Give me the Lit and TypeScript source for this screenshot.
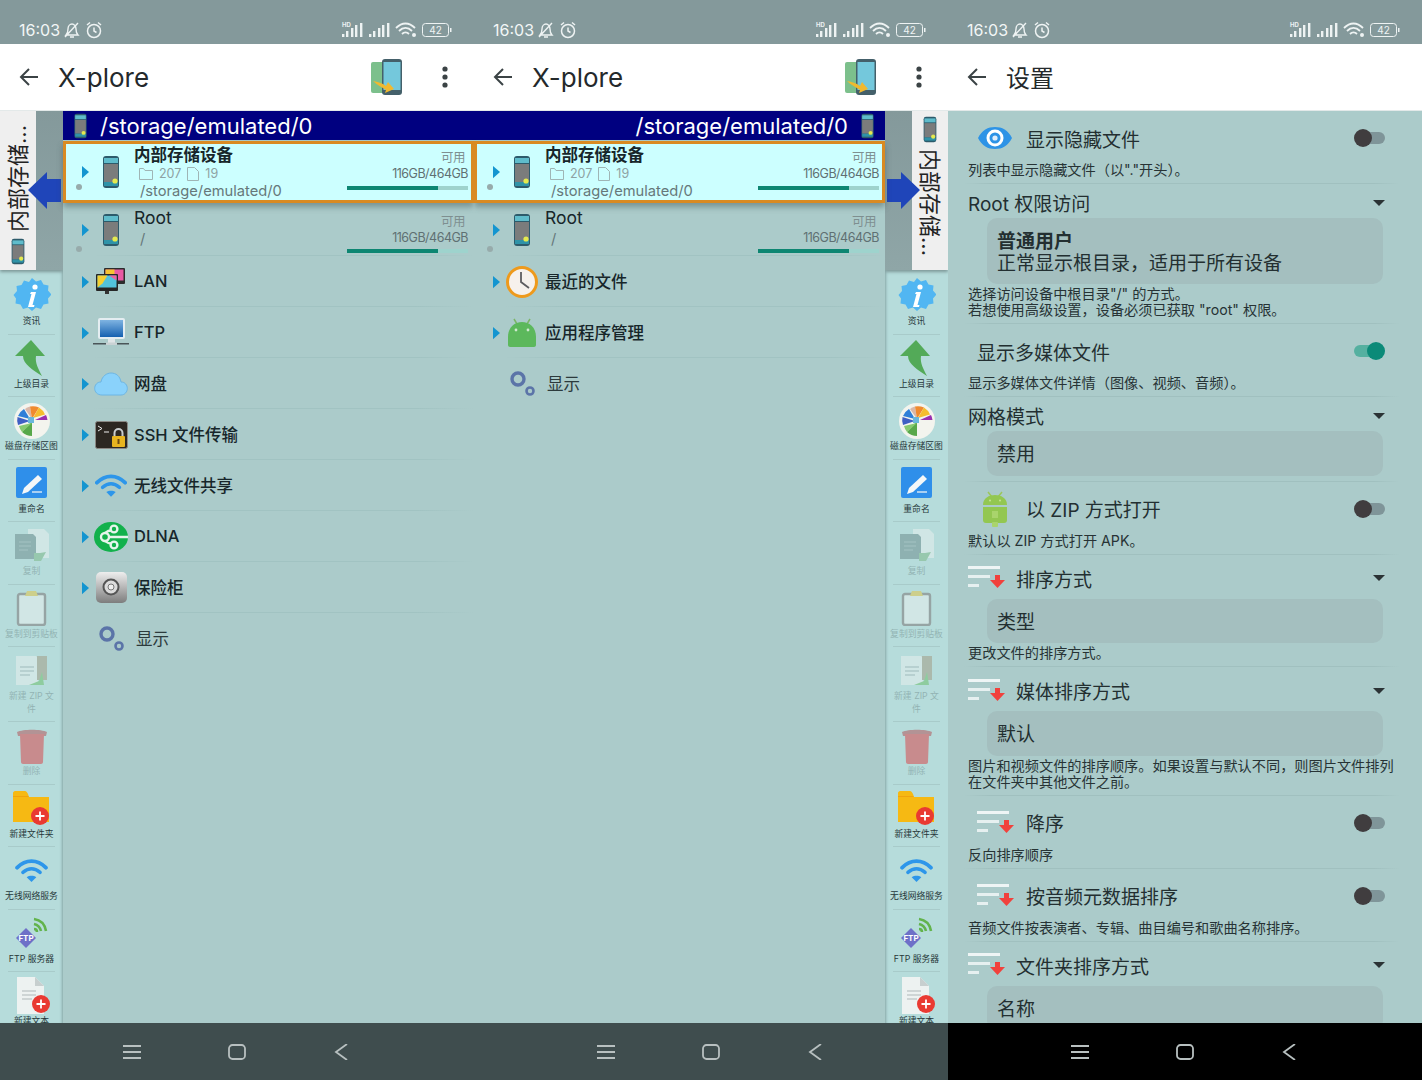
import { LitElement, html, css, TemplateResult } from 'lit'
import { customElement } from 'lit/decorators.js'

const storage = (w = 18, h = 34) => html`<svg width=${w} height=${h} viewBox="0 0 18 34">
  <rect x="1" y="1" width="16" height="32" rx="3" fill="#2d5b6b" />
  <rect x="2" y="3" width="14" height="5" fill="#5fbccb" />
  <rect x="2" y="9" width="14" height="18" fill="#7b7c7c" />
  <rect x="2" y="27" width="14" height="4" fill="#2f93a8" />
  <circle cx="13" cy="26" r="2.6" fill="#e4ea4e" />
</svg>`

const seal = html`<svg width="38" height="38" viewBox="0 0 38 38">
  <path d="M19 1l4 3.500 5-1.500 2.500 4.500 5 1-.5 5 3.500 4-3.500 4 .5 5-5 1-2.500 4.500-5-1.500-4 3.500-4-3.500-5 1.500-2.500-4.500-5-1 .5-5L.500 18 4 14l-.5-5 5-1L11 3.500 16 5z" fill="#51b6f2" />
  <circle cx="22" cy="10" r="2.600" fill="#fff" />
  <path d="M18 15h5l-3.500 13h2l-.5 2h-6l3.500-13h-1.500z" fill="#fff" />
</svg>`

const upArrow = html`<svg width="36" height="36" viewBox="0 0 36 36">
  <path d="M17 0L1 16h8c0 8 10 14 19 20-4-8-7-13-6-20h9z" fill="#53aa58" />
</svg>`

const pie = html`<svg width="36" height="36" viewBox="0 0 36 36">
  <circle cx="18" cy="18" r="18" fill="#f3f4ee" />
  <path d="M18 16L11 6a15 15 0 0 1 5-2.500z" fill="#d9b7a8" />
  <path d="M18 16L16 3.500a15 15 0 0 1 9 1z" fill="#f08a2e" />
  <path d="M19 15l6-10.500a15 15 0 0 1 6 7z" fill="#f5bd2f" />
  <path d="M21 17l11-5a15 15 0 0 1 1.500 5z" fill="#9a2fb0" />
  <path d="M18 18v15a15 15 0 0 1-10-4z" fill="#58a84a" />
  <path d="M18 20l-10 9a15 15 0 0 1-3-6z" fill="#86c96f" />
  <path d="M16 18L4 22a15 15 0 0 1-.5-8z" fill="#3f5fc4" />
  <path d="M16 16L4 13a15 15 0 0 1 6-7z" fill="#2f7fd8" />
  <path d="M14 14h6v6h-6z" fill="#69b7dc" />
</svg>`

const rename = html`<svg width="32" height="32" viewBox="0 0 32 32">
  <rect width="31" height="31" rx="2" fill="#2f8fea" />
  <path d="M22 8l4 4-14 13-6 2 2-6z" fill="#f4f7f8" />
  <rect x="16" y="24" width="10" height="2" fill="#a9cff2" />
</svg>`

const copy = html`<svg width="36" height="34" viewBox="0 0 36 34">
  <path d="M14 0h16l5 5v24H14z" fill="#e6efee" />
  <path d="M1 5h18l3 3v22H1z" fill="#6f8e8f" />
  <path d="M5 13h12M5 17h12M5 21h9" stroke="#8ba6a6" stroke-width="1.500" />
  <path d="M20 32v-8h6l6-1-5 9z" fill="#7fb98a" />
</svg>`

const clipboard = html`<svg width="32" height="36" viewBox="0 0 32 36">
  <rect x="2" y="4" width="27" height="31" rx="2" fill="#e8efee" stroke="#7d7878" stroke-width="2.400" />
  <path d="M11 1h9l2 5H9z" fill="#e0c64a" />
</svg>`

const zip = html`<svg width="34" height="32" viewBox="0 0 34 32">
  <path d="M1 1h20l2 2v27H1z" fill="#e6efee" />
  <path d="M22 1h10v24H22z" fill="#a39e86" />
  <path d="M5 12h14M5 16h14M5 20h10" stroke="#a9bcbc" stroke-width="1.500" />
  <path d="M14 30l10-4 3-9 2 13z" fill="#6fc06f" />
</svg>`

const trash = html`<svg width="30" height="36" viewBox="0 0 30 36">
  <path d="M0 4c6-3 24-3 30 0l-1 4H1z" fill="#b2585c" />
  <path d="M3 6h24l-1 28c0 1-1 2-2 2H6c-1 0-2-1-2-2z" fill="#d8494e" />
</svg>`

const folderNew = html`<svg width="37" height="35" viewBox="0 0 37 35">
  <path d="M0 2c0-1 1-2 2-2h10c1 0 2 1 3 3l1 3h20v25H0z" fill="#f6b913" />
  <path d="M0 5h15l1 1H0z" fill="#f0a30e" />
  <circle cx="27" cy="25" r="9" fill="#e93a32" />
  <path d="M27 20.500v9M22.500 25h9" stroke="#fff" stroke-width="1.800" />
</svg>`

const wifi = (w: number, h: number, c = '#2d96ea') => html`<svg width=${w} height=${h} viewBox="0 0 34 24">
  <path d="M2 9c9-9 21-9 30 0" stroke=${c} stroke-width="4" fill="none" stroke-linecap="round" />
  <path d="M8 14c6-5 12-5 18 0" stroke=${c} stroke-width="3.600" fill="none" stroke-linecap="round" />
  <path d="M12 19c3-2 7-2 10 0l-5 5z" fill=${c} />
</svg>`

const ftpServer = html`<svg width="32" height="32" viewBox="0 0 32 32">
  <path d="M18 2c7 1 11 6 12 12M18 7c4 1 6 3 7 7M18 12c2 0 3 1 3 3" stroke="#62b34c" stroke-width="2.600" fill="none" />
  <path d="M10 11l10 10-10 10L0 21z" fill="#6e70c8" />
  <text x="10" y="24" font-size="8" font-weight="700" text-anchor="middle" fill="#fff" font-family="Inter, sans-serif">FTP</text>
</svg>`

const textNew = html`<svg width="36" height="38" viewBox="0 0 36 38">
  <path d="M3 0h18l9 9v28H3z" fill="#edf2f1" />
  <path d="M21 0l9 9h-9z" fill="#c7cfcf" />
  <path d="M8 14h14M8 18h14M8 22h10" stroke="#c3cccc" stroke-width="1.500" />
  <circle cx="27" cy="27" r="9" fill="#e93a32" />
  <path d="M27 22.500v9M22.500 27h9" stroke="#fff" stroke-width="1.800" />
</svg>`

const lan = html`<svg width="30" height="28" viewBox="0 0 30 28">
  <rect x="8" y="0" width="21" height="16" rx="1" fill="#2c2c2c" />
  <rect x="9.500" y="1.500" width="18" height="11" fill="#e85aa4" />
  <rect x="9.500" y="1.500" width="9" height="5" fill="#f5c431" />
  <rect x="0" y="6" width="22" height="17" rx="1" fill="#262626" />
  <rect x="1.500" y="7.500" width="19" height="12" fill="#52c3dc" />
  <path d="M1.500 7.500h10l-5 8-5 4z" fill="#f5d031" />
  <path d="M13 7.500h7.500v5z" fill="#ec5f9f" />
  <rect x="9" y="23" width="4" height="3" fill="#333" />
</svg>`

const ftp = html`<svg width="36" height="30" viewBox="0 0 36 30">
  <defs><linearGradient id="fs" x1="0" y1="0" x2="0" y2="1"><stop offset="0" stop-color="#7fb4e2" /><stop offset="1" stop-color="#1560b0" /></linearGradient></defs>
  <rect x="5" y="0" width="27" height="21" rx="2" fill="#e4edf1" />
  <rect x="7" y="2" width="23" height="17" fill="url(#fs)" />
  <rect x="15" y="21" width="7" height="4" fill="#dfe5e7" />
  <rect x="0" y="25" width="14" height="1.500" fill="#4a5558" />
  <rect x="22" y="25" width="14" height="1.500" fill="#4a5558" />
  <rect x="13" y="24.500" width="11" height="2.500" fill="#c9d2d4" />
</svg>`

const cloud = html`<svg width="34" height="24" viewBox="0 0 34 24">
  <path d="M8 23C3 23 .7 19.500 .7 16.500 .7 13 3 10 7 10c1-6 6-9 10-9 5 0 9 3 10 9 4 0 6.300 3 6.300 6.500 0 3-2.300 6.500-6.300 6.500z" fill="#8ad2fb" stroke="#6db6e4" />
</svg>`

const ssh = html`<svg width="33" height="28" viewBox="0 0 33 28">
  <rect x=".5" y=".5" width="32" height="27" rx="2" fill="#2c2722" stroke="#8a8884" />
  <path d="M3 5l4 2.500-4 2.500M9 11h5" stroke="#eee" fill="none" />
  <rect x="17" y="15" width="13" height="11" rx="1" fill="#e8b420" />
  <path d="M19.500 15v-3a4 4 0 0 1 8 0v3" stroke="#c9cdcf" stroke-width="2" fill="none" />
  <rect x="22.500" y="18" width="2" height="5" fill="#6c4a12" />
</svg>`

const dlna = html`<svg width="34" height="30" viewBox="0 0 34 30">
  <ellipse cx="17" cy="15" rx="17" ry="15" fill="#12b14c" />
  <g fill="none" stroke="#e6f5ec" stroke-width="2.400">
    <circle cx="11" cy="15" r="4" />
    <circle cx="20" cy="7" r="3.400" />
    <circle cx="20" cy="23" r="3.400" />
    <path d="M15 15h19M17 8.500c-3 0-4 1-6 2.500M17 21.500c-3 0-4-1-6-2.500" />
  </g>
</svg>`

const safe = html`<svg width="31" height="31" viewBox="0 0 31 31">
  <defs><linearGradient id="sf" x1="0" y1="0" x2="0" y2="1"><stop offset="0" stop-color="#eee" /><stop offset="1" stop-color="#7d7d7d" /></linearGradient></defs>
  <rect width="31" height="31" rx="5" fill="url(#sf)" />
  <circle cx="15" cy="15" r="7.500" fill="#dcdcdc" stroke="#555" stroke-width="2" />
  <circle cx="15" cy="15" r="3" fill="#efefef" stroke="#777" />
</svg>`

const gears = html`<svg width="27" height="26" viewBox="0 0 27 26">
  <circle cx="9" cy="8" r="6" fill="none" stroke="#5b74a8" stroke-width="3.400" />
  <circle cx="21" cy="20" r="3.500" fill="none" stroke="#5b74a8" stroke-width="2.600" />
</svg>`

const clock = html`<svg width="32" height="32" viewBox="0 0 32 32">
  <circle cx="16" cy="16" r="14.500" fill="#f6f1ec" stroke="#ee9a1c" stroke-width="3" />
  <path d="M15 6v10l8 6" fill="none" stroke="#5d5d60" stroke-width="1.800" />
</svg>`

const android = html`<svg width="30" height="29" viewBox="0 0 30 29">
  <path d="M7 1l3 5M23 1l-3 5" stroke="#7bb566" stroke-width="1.500" />
  <path d="M1 19C1 9 8 4 15 4s14 5 14 15v8c0 1-1 2-2 2H3c-1 0-2-1-2-2z" fill="#5cb85c" />
  <circle cx="9" cy="12" r="1.400" fill="#cfe9cf" />
  <circle cx="21" cy="12" r="1.400" fill="#cfe9cf" />
</svg>`

const eye = html`<svg width="36" height="24" viewBox="0 0 36 24">
  <path d="M1 12C5 4 11 1 18 1s13 3 17 11c-4 8-10 11-17 11S5 20 1 12z" fill="#2d93e6" />
  <circle cx="18" cy="12" r="8.500" fill="#fff" />
  <circle cx="18" cy="12" r="5.500" fill="#2d93e6" />
  <circle cx="18" cy="12" r="2.600" fill="#dfeefc" />
</svg>`

const androidZip = html`<svg width="26" height="36" viewBox="0 0 26 36">
  <path d="M6 1l4 5M20 1l-4 5" stroke="#9cc75a" stroke-width="1.500" />
  <path d="M1 14C1 7 7 4 13 4s12 3 12 10z" fill="#93c751" />
  <path d="M1 16h24v13c0 2-1 3-3 3H4c-2 0-3-1-3-3z" fill="#93c751" />
  <circle cx="8" cy="9.500" r="1" fill="#c6e394" />
  <circle cx="18" cy="9.500" r="1" fill="#c6e394" />
  <rect x="10" y="31" width="6" height="5" rx="1" fill="#a9d46c" />
  <rect x="10" y="20" width="6" height="7" fill="#a9d46c" />
</svg>`

const sortIcon = html`<svg width="37" height="24" viewBox="0 0 37 24">
  <rect x="0" y="0" width="32" height="3" fill="#eef5f5" />
  <rect x="0" y="9" width="22" height="3" fill="#e6f0f0" />
  <rect x="0" y="18" width="11" height="3" fill="#e6f0f0" />
  <path d="M27 9h5v5h5l-7.500 8L22 14h5z" fill="#f1413c" />
</svg>`

const swapPhones = html`<svg width="31" height="36" viewBox="0 0 31 36">
  <rect x="0" y="3" width="18" height="31" rx="2" fill="#7cc08c" />
  <rect x="11" y="0" width="20" height="36" rx="3" fill="#44606a" />
  <rect x="12.500" y="3" width="17" height="28" fill="#74c8dc" />
  <path d="M2 22c5 1 9 2 13 5l2-4 6 7-9 4 1-3c-4-3-9-5-13-9z" fill="#f1b92f" />
</svg>`

type Row = { icon: TemplateResult; name: string; plain?: boolean }

const leftRows: Row[] = [
  { icon: lan, name: 'LAN' },
  { icon: ftp, name: 'FTP' },
  { icon: cloud, name: '网盘' },
  { icon: ssh, name: 'SSH 文件传输' },
  { icon: wifi(32, 23), name: '无线文件共享' },
  { icon: dlna, name: 'DLNA' },
  { icon: safe, name: '保险柜' },
  { icon: gears, name: '显示', plain: true },
]

const midRows: Row[] = [
  { icon: clock, name: '最近的文件' },
  { icon: android, name: '应用程序管理' },
  { icon: gears, name: '显示', plain: true },
]

const tools: { icon: TemplateResult; label: string; off?: boolean }[] = [
  { icon: seal, label: '资讯' },
  { icon: upArrow, label: '上级目录' },
  { icon: pie, label: '磁盘存储区图' },
  { icon: rename, label: '重命名' },
  { icon: copy, label: '复制', off: true },
  { icon: clipboard, label: '复制到剪贴板', off: true },
  { icon: zip, label: '新建 ZIP 文件', off: true },
  { icon: trash, label: '删除', off: true },
  { icon: folderNew, label: '新建文件夹' },
  { icon: wifi(33, 23), label: '无线网络服务' },
  { icon: ftpServer, label: 'FTP 服务器' },
  { icon: textNew, label: '新建文本' },
]

type Setting = {
  title: string
  desc?: string[]
  icon?: TemplateResult
  toggle?: boolean
  on?: boolean
  value?: string[]
  boldFirst?: boolean
}

const settings: Setting[] = [
  { title: '显示隐藏文件', icon: eye, toggle: true, desc: ['列表中显示隐藏文件（以"."开头）。'] },
  {
    title: 'Root 权限访问',
    value: ['普通用户', '正常显示根目录，适用于所有设备'],
    boldFirst: true,
    desc: ['选择访问设备中根目录"/" 的方式。', '若想使用高级设置，设备必须已获取 "root" 权限。'],
  },
  { title: '显示多媒体文件', toggle: true, on: true, desc: ['显示多媒体文件详情（图像、视频、音频）。'] },
  { title: '网格模式', value: ['禁用'] },
  { title: '以 ZIP 方式打开', icon: androidZip, toggle: true, desc: ['默认以 ZIP 方式打开 APK。'] },
  { title: '排序方式', icon: sortIcon, value: ['类型'], desc: ['更改文件的排序方式。'] },
  {
    title: '媒体排序方式',
    icon: sortIcon,
    value: ['默认'],
    desc: ['图片和视频文件的排序顺序。如果设置与默认不同，则图片文件排列', '在文件夹中其他文件之前。'],
  },
  { title: '降序', icon: sortIcon, toggle: true, desc: ['反向排序顺序'] },
  { title: '按音频元数据排序', icon: sortIcon, toggle: true, desc: ['音频文件按表演者、专辑、曲目编号和歌曲名称排序。'] },
  { title: '文件夹排序方式', icon: sortIcon, value: ['名称'] },
]

@customElement('app-root')
export class AppRoot extends LitElement {
  static styles = css`
    :host {
      display: grid;
      grid-template-columns: repeat(3, 474px);
      height: 1080px;
      font-family: Inter, 'Noto Sans CJK SC', sans-serif;
      color: #1d2a2c;
      overflow: hidden;
    }

    .phone {
      display: flex;
      flex-direction: column;
      height: 1080px;
      overflow: hidden;
      background: #abcbca;
    }

    .status {
      height: 44px;
      flex: none;
      background: #84999b;
      display: flex;
      align-items: center;
      padding: 15px 22px 0 19px;
      box-sizing: border-box;
      color: #f2f6f6;
      font-size: 16px;
    }
    .status .time {
      margin-right: 3px;
    }
    .status svg {
      display: block;
    }
    .status .gap {
      flex: 1;
    }
    .status .sp {
      width: 4px;
    }

    .appbar {
      height: 67px;
      flex: none;
      background: #fff;
      display: flex;
      align-items: center;
      padding: 0 26px 0 19px;
      box-sizing: border-box;
      font-size: 24px;
      color: #24292b;
      border-bottom: 1px solid #e3e9e9;
    }
    .appbar .back {
      margin-right: 19px;
    }
    .appbar .title {
      flex: 1;
      padding-bottom: 2px;
    }
    .appbar .title.latin {
      font-size: 26px;
      padding: 1px 0 0;
    }
    .appbar .menu {
      margin-left: 40px;
    }

    .body {
      height: 912px;
      flex: none;
      display: flex;
      overflow: hidden;
    }

    .rail {
      width: 63px;
      flex: none;
      background: #b6dcdb;
      box-shadow: inset -3px 0 3px -2px #85a5a5;
      overflow: hidden;
    }
    .rail.right {
      box-shadow: inset 3px 0 3px -2px #85a5a5;
    }
    .rail-top {
      height: 159px;
      display: flex;
      position: relative;
      background: linear-gradient(#84999b, #8fa6a7);
      margin-bottom: 2px;
      box-shadow: 0 2px 3px #7e9999;
    }
    .rail.right .rail-top {
      flex-direction: row-reverse;
    }

    .tab {
      width: 36px;
      height: 159px;
      flex: none;
      background: #efefef;
      writing-mode: vertical-rl;
      text-orientation: sideways;
      display: flex;
      align-items: center;
      gap: 6px;
      padding-top: 5px;
      box-sizing: border-box;
      font-size: 22px;
      line-height: 1;
      color: #222;
      white-space: nowrap;
    }
    .rail.left .tab {
      transform: rotate(180deg);
    }
    .rail.left .tab svg {
      transform: rotate(180deg);
    }

    .arrow {
      position: absolute;
      top: 61px;
    }
    .rail.left .arrow {
      left: 28px;
    }
    .rail.right .arrow {
      right: 28px;
      transform: scaleX(-1);
    }

    .tools {
      display: flex;
      flex-direction: column;
    }
    .tool {
      padding: 4px 5px 7px;
      display: flex;
      flex-direction: column;
      align-items: center;
      position: relative;
      box-sizing: border-box;
      font-size: 8.800px;
      line-height: 12.500px;
      text-align: center;
      color: #26383a;
    }
    .tool::after {
      content: '';
      position: absolute;
      left: 8px;
      right: 8px;
      bottom: 0;
      height: 1px;
      background: #a8cbca;
    }
    .tool.off .ti {
      opacity: 0.55;
    }
    .tool.off .tl {
      opacity: 0.25;
    }
    .ti {
      height: 39px;
      display: flex;
      align-items: center;
      justify-content: center;
    }

    .list {
      flex: 1;
      min-width: 0;
      display: flex;
      flex-direction: column;
    }

    .pathbar {
      height: 29px;
      flex: none;
      background: #000080;
      color: #fff;
      font-size: 22px;
      display: flex;
      align-items: center;
      gap: 12px;
      padding: 0 10px;
    }
    .pathbar.rev {
      flex-direction: row-reverse;
    }
    .pathbar svg {
      flex: none;
    }

    .row {
      flex: none;
      display: flex;
      align-items: center;
      position: relative;
      height: 51px;
    }
    .row.sep::after {
      content: '';
      position: absolute;
      left: 30px;
      right: 0;
      bottom: 0;
      height: 1px;
      background: linear-gradient(90deg, transparent, #a1c3c2 15%, #a1c3c2 85%, transparent);
    }
    .row.storage {
      height: 53px;
      align-items: flex-start;
    }
    .row.sel {
      height: 62px;
      margin-top: 1px;
      background: #ccffff;
      box-shadow: inset 0 0 0 3px #d98a22, 0 4px 6px rgba(60, 80, 80, 0.45);
      z-index: 1;
    }
    .gut {
      width: 26px;
      height: 100%;
      flex: none;
      display: flex;
      align-items: center;
      padding-left: 19px;
      box-sizing: border-box;
      position: relative;
    }
    .dot {
      position: absolute;
      left: 13px;
      top: 43px;
      width: 6px;
      height: 6px;
      border-radius: 50%;
      background: #97abab;
    }
    .ico {
      width: 44px;
      height: 100%;
      flex: none;
      display: flex;
      align-items: center;
      justify-content: center;
    }
    .name {
      margin-left: 1px;
      font-size: 16.500px;
      font-weight: 500;
      flex: 1;
      white-space: nowrap;
      color: #17262a;
      padding-bottom: 1px;
    }
    .name.plain {
      font-weight: 400;
      margin-left: 3px;
      color: #2c3a3c;
    }
    .info {
      flex: 1;
      margin-left: 1px;
      padding-top: 4px;
      min-width: 0;
    }
    .info .name {
      margin: 0;
      padding: 0;
      line-height: 20px;
      display: block;
    }
    .info .name.big {
      font-size: 17.500px;
      font-weight: 400;
      padding-top: 1px;
    }
    .info .sub {
      display: flex;
      align-items: center;
      gap: 6px;
      margin: 1px 0 0 5px;
      font-size: 12.500px;
      line-height: 16px;
      color: #8ea2a3;
    }
    .info .path {
      margin-left: 6px;
      font-size: 14.700px;
      line-height: 19px;
      color: #66787a;
    }
    .info .path.root {
      margin-top: 2px;
    }
    .meta {
      width: 121px;
      flex: none;
      margin-right: 6px;
      padding-top: 11px;
      font-size: 12.500px;
      line-height: 16px;
      text-align: right;
      color: #5f7072;
      letter-spacing: -0.500px;
    }
    .row.sel .meta {
      padding-top: 9px;
    }
    .meta .avail {
      padding-right: 3px;
      color: #7e8f90;
    }
    .meter {
      height: 4px;
      margin-top: 3px;
      background: #9ed3cd;
    }
    .row.sel .meter {
      margin-top: 4px;
    }
    .meter i {
      display: block;
      height: 100%;
      width: 75%;
      background: #0d8672;
    }

    .settings {
      flex: 1;
      overflow: hidden;
    }
    .set {
      position: relative;
      padding: 0 0 6px 20px;
    }
    .set::after {
      content: '';
      position: absolute;
      left: 16px;
      right: 22px;
      bottom: 0;
      height: 1px;
      background: linear-gradient(90deg, transparent, #a0c0bf 6%, #a0c0bf 94%, transparent);
    }
    .set:last-child::after {
      display: none;
    }
    .set .head {
      display: flex;
      align-items: center;
      height: 46px;
      margin-top: 5px;
      font-size: 19px;
      color: #232f31;
      box-sizing: border-box;
      padding-bottom: 2px;
    }
    .set.drop .head {
      height: 29px;
    }
    .set.drop.has-icon .head {
      height: 39px;
    }
    .set.drop .himg {
      width: 48px;
      flex: none;
      display: flex;
    }
    .set.toggle .himg {
      width: 58px;
      flex: none;
      display: flex;
      align-items: center;
      justify-content: center;
      padding: 0 10px 0 6px;
      box-sizing: border-box;
    }
    .set.toggle.no-icon .head {
      padding-left: 9px;
    }
    .set .htext {
      flex: 1;
      white-space: nowrap;
    }
    .caret {
      margin-right: 37px;
      width: 0;
      height: 0;
      border-left: 6px solid transparent;
      border-right: 6px solid transparent;
      border-top: 6px solid #2b3335;
    }
    .sw {
      width: 31px;
      height: 18px;
      margin-right: 37px;
      display: flex;
      align-items: center;
      position: relative;
    }
    .sw::before {
      content: '';
      position: absolute;
      right: 0;
      width: 24px;
      height: 12px;
      border-radius: 6px;
      background: #7f9599;
    }
    .sw::after {
      content: '';
      position: absolute;
      left: 0;
      width: 18px;
      height: 18px;
      border-radius: 50%;
      background: #403d3f;
    }
    .sw.on::before {
      left: 0;
      right: auto;
      background: #55b0a0;
    }
    .sw.on::after {
      left: auto;
      right: 0;
      background: #0b8a78;
    }
    .box {
      margin: 0 39px 0 19px;
      padding: 13px 10px 9px;
      background: #a4bfbf;
      border-radius: 10px;
      font-size: 19px;
      line-height: 22px;
      color: #232f31;
      box-sizing: border-box;
      min-height: 44.500px;
    }
    .box b {
      font-weight: 700;
      display: block;
    }
    .desc {
      font-size: 14.200px;
      line-height: 16px;
      color: #273335;
      margin-right: 20px;
      white-space: nowrap;
    }
    .box + .desc {
      margin-top: 2px;
    }

    .nav {
      height: 57px;
      flex: none;
      background: #3f4d4e;
      display: flex;
      align-items: flex-start;
      justify-content: center;
      gap: 87px;
      padding-top: 21px;
      box-sizing: border-box;
    }
    .nav.black {
      background: #000;
    }
    .nav svg {
      display: block;
    }
  `

  private statusBar() {
    return html`<div class="status">
      <span class="time">16:03</span>
      <svg width="18" height="18" viewBox="0 0 18 18" fill="none" stroke="#eef3f3" stroke-width="1.400">
        <path d="M3 14h12c-1.500-1.500-2-3-2-6 0-3-2-5-4-5S5 5 5 8c0 3-.5 4.500-2 6zM15 2L2 16M7 16h4" />
      </svg>
      <span class="sp"></span>
      <svg width="18" height="18" viewBox="0 0 18 18" fill="none" stroke="#eef3f3" stroke-width="1.500">
        <circle cx="9" cy="10" r="6.500" />
        <path d="M9 6.500V10l2.500 1.500M2 4l3-2.500M16 4l-3-2.500" />
      </svg>
      <span class="gap"></span>
      <svg width="111" height="16" viewBox="0 0 111 16">
        <text x="1" y="5" font-size="6" font-weight="700" fill="#eef3f3" font-family="Inter, sans-serif">HD</text>
        <g fill="#eef3f3">
          <rect x="1" y="12" width="2.400" height="3" /><rect x="5" y="9" width="2.400" height="6" />
          <rect x="10" y="6" width="2.400" height="9" /><rect x="14" y="3" width="2.400" height="12" />
          <rect x="19" y="1" width="2.400" height="14" />
          <rect x="28" y="12" width="2.400" height="3" /><rect x="32" y="9" width="2.400" height="6" />
          <rect x="37" y="6" width="2.400" height="9" /><rect x="41" y="3" width="2.400" height="12" />
          <rect x="46" y="1" width="2.400" height="14" />
        </g>
        <path d="M55 6c6-6 13-6 19 0M58 9c4-4 9-4 13 0M61 12c2-2 5-2 7 0" stroke="#eef3f3" stroke-width="1.800" fill="none" />
        <circle cx="73" cy="13" r="2" fill="#eef3f3" />
        <rect x="81.500" y="1.500" width="26" height="13" rx="3" fill="none" stroke="#eef3f3" />
        <rect x="109" y="6" width="1.500" height="4" fill="#eef3f3" />
        <text x="94.500" y="12" font-size="10" text-anchor="middle" fill="#eef3f3" font-family="Inter, sans-serif">42</text>
      </svg>
    </div>`
  }

  private appBar(title: string, withTools: boolean) {
    return html`<div class="appbar">
      <svg class="back" width="20" height="20" viewBox="0 0 20 20" fill="none" stroke="#3b4345" stroke-width="2">
        <path d="M19 10H2M10 2l-8 8 8 8" />
      </svg>
      <span class="title ${withTools ? 'latin' : ''}">${title}</span>
      ${withTools
        ? html`${swapPhones}
            <svg class="menu" width="6" height="22" viewBox="0 0 6 22" fill="#3b4345">
              <circle cx="3" cy="3" r="2.600" /><circle cx="3" cy="11" r="2.600" /><circle cx="3" cy="19" r="2.600" />
            </svg>`
        : ''}
    </div>`
  }

  private navBar(black = false) {
    return html`<div class="nav ${black ? 'black' : ''}">
      <svg width="18" height="16" viewBox="0 0 18 16" stroke="#b8c0c0" stroke-width="1.800">
        <path d="M0 2h18M0 8h18M0 14h18" />
      </svg>
      <svg width="18" height="16" viewBox="0 0 18 16" fill="none" stroke="#b8c0c0" stroke-width="1.800">
        <rect x="1" y="1" width="16" height="14" rx="3.500" />
      </svg>
      <svg width="18" height="16" viewBox="0 0 18 16" fill="none" stroke="#b8c0c0" stroke-width="1.800">
        <path d="M14 0L3 8l11 8" />
      </svg>
    </div>`
  }

  private rail(side: 'left' | 'right') {
    return html`<div class="rail ${side}">
      <div class="rail-top">
        <div class="tab">${storage(16, 27)}<span>内部存储...</span></div>
        <svg class="arrow" width="33" height="37" viewBox="0 0 33 37">
          <path d="M0 18L19 0v7h14v23H19v7z" fill="#1f45b9" />
        </svg>
      </div>
      <div class="tools">
        ${tools.map(
          (t) => html`<div class="tool ${t.off ? 'off' : ''}">
            <div class="ti">${t.icon}</div>
            <div class="tl">${t.label}</div>
          </div>`,
        )}
      </div>
    </div>`
  }

  private tri() {
    return html`<svg width="8" height="14" viewBox="0 0 8 14"><path d="M0 0l8 7-8 7z" fill="#1395d0" /></svg>`
  }

  private storageRow(name: string, sel: boolean) {
    return html`<div class="row storage ${sel ? 'sel' : 'sep'}">
      <div class="gut">${this.tri()}<span class="dot"></span></div>
      <div class="ico">${storage()}</div>
      <div class="info">
        <span class="name ${sel ? '' : 'big'}" style="font-weight:${sel ? 700 : 400}">${name}</span>
        ${sel
          ? html`<div class="sub">
                <svg width="14" height="12" viewBox="0 0 14 12" fill="none" stroke="#9fb5b5">
                  <path d="M.5 11.500v-11h4l1.500 2h7.500v9z" />
                </svg>
                <span>207</span>
                <svg width="12" height="14" viewBox="0 0 12 14" fill="none" stroke="#9fb5b5">
                  <path d="M.5.500h7l4 4v9h-11z" />
                </svg>
                <span>19</span>
              </div>
              <div class="path">/storage/emulated/0</div>`
          : html`<div class="path root">/</div>`}
      </div>
      <div class="meta">
        <div class="avail">可用</div>
        <div>116GB/464GB</div>
        <div class="meter"><i></i></div>
      </div>
    </div>`
  }

  private fileList(rows: Row[], rev: boolean) {
    return html`<div class="list">
      <div class="pathbar ${rev ? 'rev' : ''}">${storage(15, 26)}<span>/storage/emulated/0</span></div>
      ${this.storageRow('内部存储设备', true)} ${this.storageRow('Root', false)}
      ${rows.map(
        (r, i) => html`<div class="row ${i < rows.length - 1 ? 'sep' : ''}">
          <div class="gut">${r.plain ? '' : this.tri()}</div>
          <div class="ico">${r.icon}</div>
          <div class="name ${r.plain ? 'plain' : ''}">${r.name}</div>
        </div>`,
      )}
    </div>`
  }

  private setting(s: Setting) {
    const cls = [s.toggle ? 'toggle' : 'drop', s.icon ? 'has-icon' : 'no-icon'].join(' ')
    return html`<div class="set ${cls}">
      <div class="head">
        ${s.icon ? html`<div class="himg">${s.icon}</div>` : ''}
        <span class="htext">${s.title}</span>
        ${s.toggle ? html`<span class="sw ${s.on ? 'on' : ''}"></span>` : html`<span class="caret"></span>`}
      </div>
      ${s.value
        ? html`<div class="box">
            ${s.value.map((v, n) => (s.boldFirst && n === 0 ? html`<b>${v}</b>` : html`<div>${v}</div>`))}
          </div>`
        : ''}
      ${(s.desc || []).map((d) => html`<div class="desc">${d}</div>`)}
    </div>`
  }

  render() {
    return html`
      <div class="phone">
        ${this.statusBar()} ${this.appBar('X-plore', true)}
        <div class="body">${this.rail('left')} ${this.fileList(leftRows, false)}</div>
        ${this.navBar()}
      </div>
      <div class="phone">
        ${this.statusBar()} ${this.appBar('X-plore', true)}
        <div class="body">${this.fileList(midRows, true)} ${this.rail('right')}</div>
        ${this.navBar()}
      </div>
      <div class="phone">
        ${this.statusBar()} ${this.appBar('设置', false)}
        <div class="body">
          <div class="settings">${settings.map((s) => this.setting(s))}</div>
        </div>
        ${this.navBar(true)}
      </div>
    `
  }
}
